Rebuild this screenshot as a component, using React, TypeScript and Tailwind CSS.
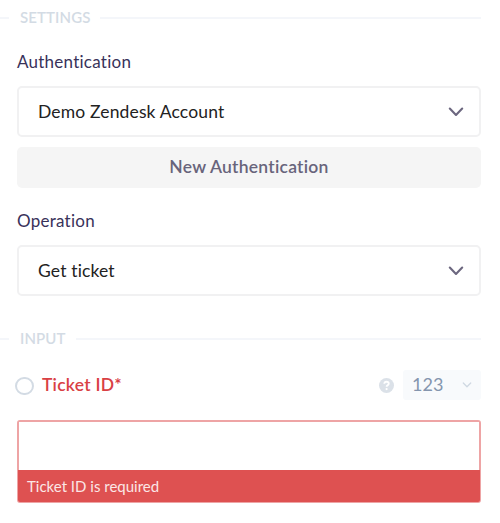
import type { ReactNode } from "react";

type SelectFieldProps = {
  label: string;
  value: string;
};

function Chevron({ className }: { className?: string }) {
  return (
    <svg className={className} fill="none" stroke="currentColor" strokeLinecap="round" strokeLinejoin="round" viewBox="0 0 16 10">
      <path d="M1.8 1.6 8 8l6.2-6.4" strokeWidth="2.1" />
    </svg>
  );
}

function SectionDivider({ children }: { children: ReactNode }) {
  return (
    <div className="flex h-5 items-center">
      <span className="h-0.5 w-[9px] bg-[#f4f6fa]" />
      <h2 className="relative -top-px mr-[10px] ml-[11px] text-[15px] leading-5 font-semibold tracking-[0.1px] text-[#d3dbe4]">{children}</h2>
      <span className="mr-[19px] h-0.5 flex-1 bg-[#f4f6fa]" />
    </div>
  );
}

function SelectField({ label, value }: SelectFieldProps) {
  return (
    <div className="flex flex-col">
      <span className="text-[17px] leading-6 tracking-[0.25px] text-[#39325a]">{label}</span>
      <button
        className="mt-3 flex h-[51px] w-full items-center justify-between rounded-[5px] border-2 border-[#f1f1f2] bg-white pr-[15px] pl-[19px] text-left text-[17.5px] leading-6 tracking-[0.15px] text-[#222]"
        type="button"
      >
        <span>{value}</span>
        <Chevron className="h-[10px] w-4 text-[#6c677f]" />
      </button>
    </div>
  );
}

export default function App() {
  return (
    <main className="h-[523px] w-[500px] overflow-hidden bg-white pt-2 font-['Lato',sans-serif] [font-variant-ligatures:none]">
      <SectionDivider>SETTINGS</SectionDivider>

      <div className="mt-[22px] mr-[19px] ml-[17px]">
        <SelectField label="Authentication" value="Demo Zendesk Account" />
        <button className="mt-[10px] h-[41px] w-full rounded-[5px] bg-[#f5f5f5] text-[17.5px] font-semibold tracking-[0.25px] text-[#68647b]" type="button">
          New Authentication
        </button>
        <div className="mt-[21px]">
          <SelectField label="Operation" value="Get ticket" />
        </div>
      </div>

      <div className="mt-[33px]">
        <SectionDivider>INPUT</SectionDivider>
      </div>

      <div className="mt-[21px] mr-[19px] ml-[15px] flex h-[30px] items-center">
        <span className="mt-px h-[18px] w-[19px] rounded-full border-2 border-[#d3dbe4]" />
        <label className="ml-2 text-[17.5px] leading-6 font-semibold tracking-[0.25px] text-[#d94044]" htmlFor="ticket-id">
          Ticket ID*
        </label>
        <svg className="ml-auto size-[15px]" viewBox="0 0 16 16">
          <circle cx="8" cy="8" fill="#dbe1e8" r="8" />
          <path d="M5.6 6.2C5.7 4.7 6.7 4 8 4s2.4.8 2.4 2.1c0 1.6-2.3 1.7-2.3 3.2" fill="none" stroke="#fff" strokeWidth="1.9" />
          <circle cx="8.1" cy="11.8" fill="#fff" r="1.2" />
        </svg>
        <button className="ml-[9px] flex h-[30px] w-[78px] items-center justify-between rounded-[3px] bg-[#f8fafc] pr-[9px] pl-[9px] text-[18px] text-[#8495ae]" type="button">
          <span className="relative -top-px">123</span>
          <Chevron className="h-[6px] w-[10px] text-[#cfd8e2]" />
        </button>
      </div>

      <div className="mt-5 mr-[19px] ml-[17px] h-[83px] rounded-[3px] border-2 border-[#eea4a5]">
        <input className="block h-12 w-full bg-white px-5 text-[17px] outline-none" id="ticket-id" type="text" />
        {/* Pulled over the inner pixel of the field border */}
        <p className="-mx-px h-8 rounded-b-[2px] bg-[#de5151] pl-[9px] text-[15px] leading-8 text-[#fbe6e6]">Ticket ID is required</p>
      </div>
    </main>
  );
}
